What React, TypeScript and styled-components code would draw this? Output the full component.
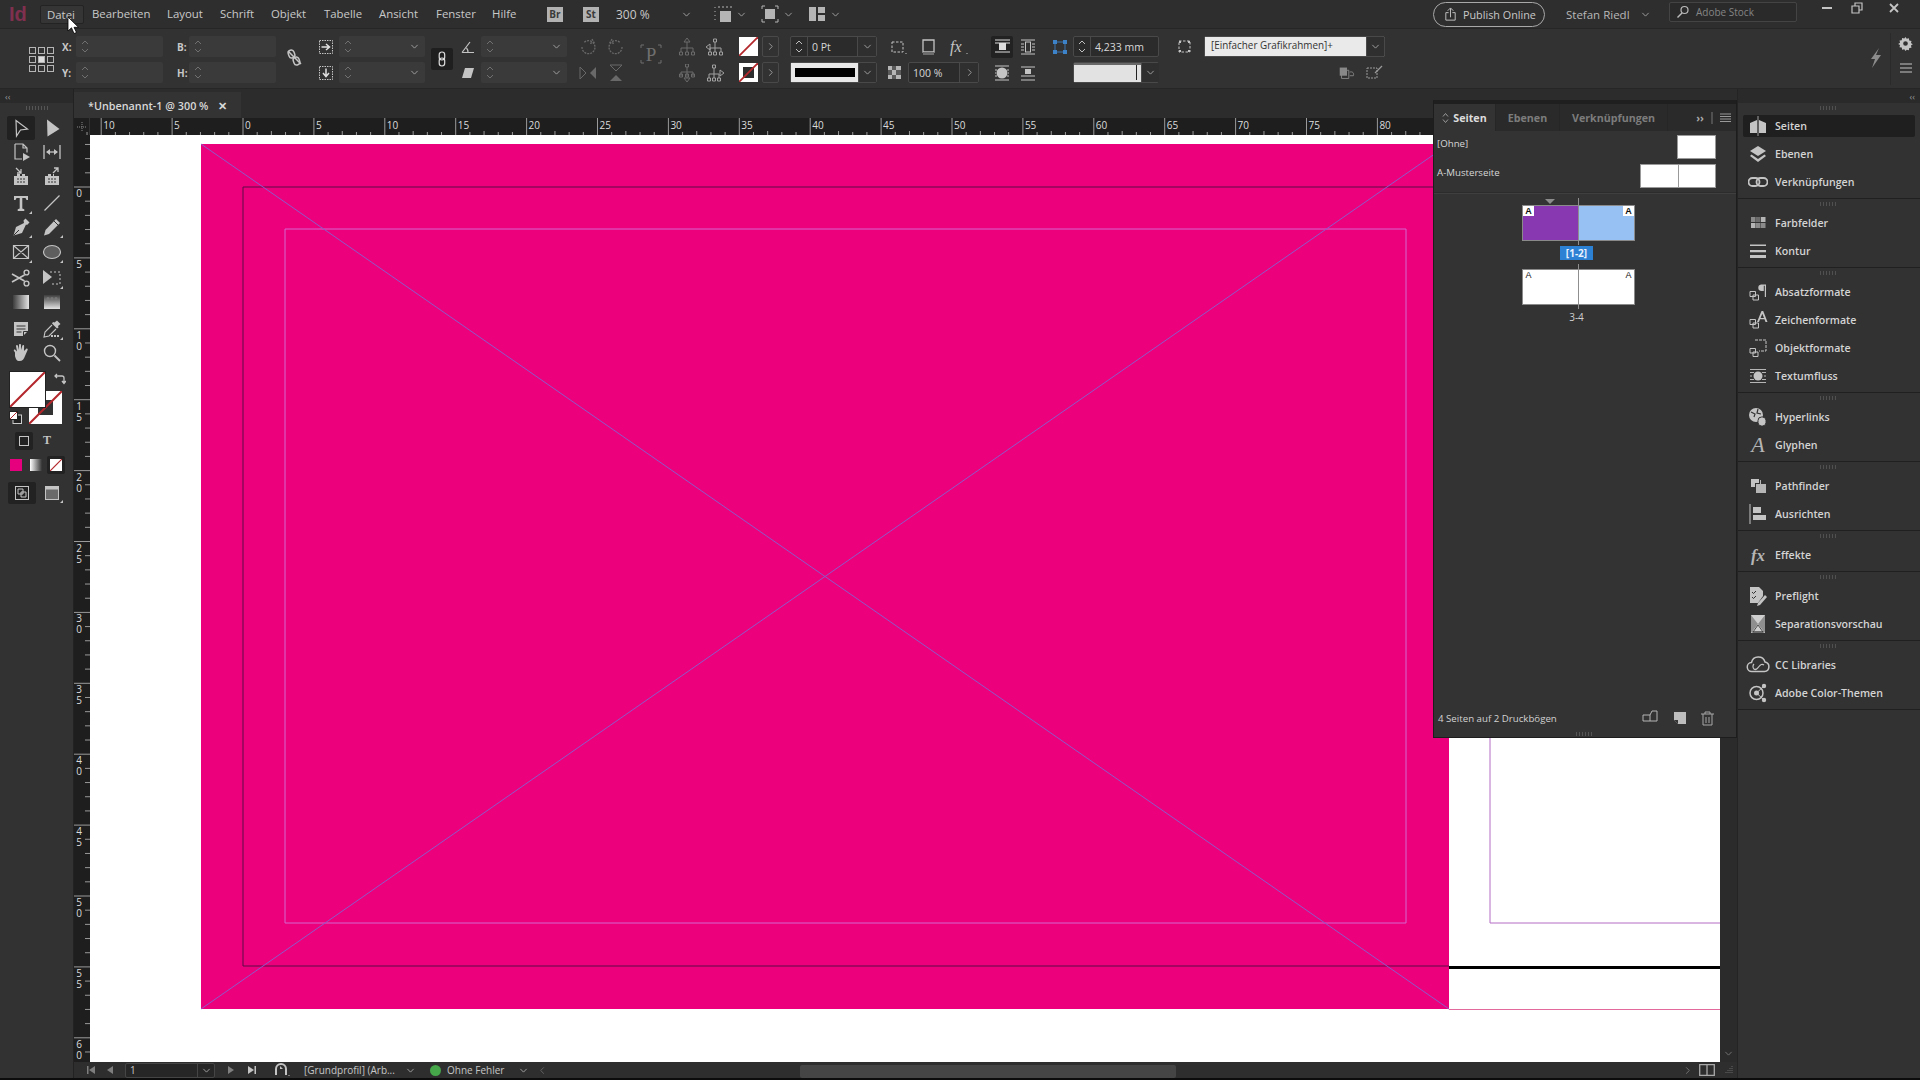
import React from "react";
import styled, { createGlobalStyle } from "styled-components";

const Global = createGlobalStyle`
  html, body { margin: 0; padding: 0; background: #0c0c0c; }
  * { box-sizing: border-box; }
  body { font-family: "Open Sans", "Noto Sans", sans-serif; color: #d6d6d6; }
`;

const Frame = styled.div`
  position: relative; width: 1920px; height: 1080px; overflow: hidden;
  display: flex; flex-direction: column; background: #0c0c0c;
`;

/* ---------- generic drawing ---------- */
const Svg = styled.svg<{ $c?: string }>`
  display: block; flex: none; color: ${p => p.$c || "#c4c4c4"};
`;
type IP = { s?: number; c?: string; children?: React.ReactNode; vb?: string; w?: number; h?: number };
const Ic = ({ s = 20, c, children, vb = "0 0 20 20", w, h }: IP) => (
  <Svg $c={c} width={w || s} height={h || s} viewBox={vb} fill="none" stroke="none">{children}</Svg>
);
const F = "currentColor";

/* ---------- menu bar ---------- */
const MenuBar = styled.div`
  height: 29px; flex: none; background: #2e2e2e; border-bottom: 1px solid #262626;
  display: flex; align-items: center; font-size: 11.4px; color: #c9c9c9; padding-left: 9px;
`;
const Logo = styled.div`
  width: 31px; font: 700 20px "Liberation Sans", sans-serif; color: #80304f; letter-spacing: 0; line-height: 1;
`;
const MenuItem = styled.div<{ $w: number; $on?: boolean }>`
  width: ${p => p.$w}px; height: 19px; line-height: 18px; padding-left: 8px; flex: none; border-radius: 2px;
  ${p => p.$on ? "background:#353535;border:1px solid #232323;padding-left:6px;line-height:17px;" : ""}
`;
const Badge = styled.div<{ $ml: number }>`
  width: 16px; height: 15px; margin-left: ${p => p.$ml}px; background: #b2b2b2; color: #3a3a3a; flex: none;
  font: 700 10px/15px "Open Sans", sans-serif; text-align: center;
`;
const Zoom = styled.div`
  margin-left: 17px; width: 66px; font-size: 12px; flex: none;
`;
const Publish = styled.div`
  position: relative; display: flex; align-items: center; gap: 5px; margin-left: auto; width: 112px; height: 25px;
  border: 1px solid #a8a8a8; border-radius: 13px; padding-left: 9px; font-size: 10.8px; flex: none;
`;
const UserName = styled.div`
  margin-left: 21px; font-size: 11.5px; color: #b8b8b8; width: 75px; flex: none;
`;
const Search = styled.div`
  margin-left: 19px; width: 128px; height: 20px; margin-top: -5px; background: #2a2a2a; border: 1px solid #444; border-radius: 2px;
  display: flex; align-items: center; gap: 6px; padding-left: 6px; color: #858585; font-size: 10px; flex: none;
`;
const WinCtl = styled.div`
  display: flex; margin-left: 15px; width: 108px; align-items: center; margin-top: -12px; color: #8a8a8a; flex: none;
`;
const WinBtn = styled.div<{ $w: number }>`
  width: ${p => p.$w}px; height: 16px; display: flex; align-items: center; justify-content: center;
`;
const Caret = ({ c = "#a6a6a6", s = 9 }: { c?: string; s?: number }) => (
  <Ic s={s} c={c} vb="0 0 10 10"><path d="M1.500 3.200 5 6.800l3.500-3.600" stroke={F} strokeWidth="1" /></Ic>
);
const MenuIcon = styled.div<{ $ml: number }>`
  margin-left: ${p => p.$ml}px; display: flex; align-items: center; gap: 5px; flex: none;
`;

/* ---------- control bar ---------- */
const ControlBar = styled.div`
  height: 60px; flex: none; background: #323232; border-bottom: 1px solid #262626;
  display: flex; align-items: flex-start; padding-top: 7px; position: relative; font-size: 10.5px; color: #d0d0d0;
`;
const Col = styled.div<{ $l: number; $w: number; $pt?: number }>`
  margin-left: ${p => p.$l}px; width: ${p => p.$w}px; flex: none; display: flex; flex-direction: column; gap: 5px;
  padding-top: ${p => p.$pt || 0}px;
`;
const CRow = styled.div<{ $gap?: number; $pl?: number }>`
  height: 21px; display: flex; align-items: center; gap: ${p => p.$gap || 0}px; padding-left: ${p => p.$pl || 0}px;
`;
const FieldLabel = styled.div<{ $w: number }>`
  width: ${p => p.$w}px; font-weight: 700; font-size: 10px; color: #c8c8c8; flex: none;
`;
const GhostInput = styled.div<{ $w: number }>`
  width: ${p => p.$w}px; height: 21px; background: #3a3a3a; border-radius: 2px; flex: none;
  display: flex; align-items: center; justify-content: space-between; padding: 0 6px 0 4px;
`;
const Stepper = ({ c = "#707070" }: { c?: string }) => (
  <Ic w={10} h={17} c={c} vb="0 0 10 17">
    <path d="M2 6 5 3l3 3M2 11l3 3 3-3" stroke={F} strokeWidth="1" />
  </Ic>
);
const Field = styled.div<{ $w: number; $fill?: string }>`
  width: ${p => p.$w}px; height: 21px; flex: none; background: ${p => p.$fill || "#2b2b2b"};
  border: 1px solid #494949; border-radius: 2px; display: flex; align-items: center; color: #d8d8d8;
`;
const FieldStep = styled.div`
  width: 17px; height: 100%; border-right: 1px solid #494949; display: flex; align-items: center; justify-content: center; flex: none;
`;
const FieldText = styled.div`
  flex: 1; padding-left: 4px; white-space: nowrap; font-size: 10.5px;
`;
const FieldEnd = styled.div<{ $w?: number }>`
  width: ${p => p.$w || 19}px; height: 100%; background: #2f2f2f; border-left: 1px solid #494949; display: flex; align-items: center; justify-content: center; flex: none;
`;
const Chain = styled.div<{ $l: number }>`
  margin: 12px 0 0 ${p => p.$l}px; width: 22px; height: 22px; background: #1f1f1f; border-radius: 2px; flex: none;
  display: flex; align-items: center; justify-content: center;
`;
const Grip = styled.div`
  width: 4px; height: 34px; margin: 9px 0 0 4px; flex: none;
  background-image: radial-gradient(#4c4c4c 35%, transparent 40%); background-size: 2px 2px;
`;
const Swatch = styled.div`
  width: 19px; height: 19px; position: relative; background: #fff; flex: none; overflow: hidden;
`;
const SlashBox = () => (
  <Ic s={19} c="#b3262b" vb="0 0 19 19"><path d="M0 19 19 0" stroke={F} strokeWidth="1.800" /></Ic>
);
const ArrowBtn = styled.div`
  width: 17px; height: 21px; border: 1px solid #494949; border-radius: 2px; display: flex; align-items: center; justify-content: center; flex: none;
`;
const Chev = ({ c = "#a0a0a0" }: { c?: string }) => (
  <Ic s={9} c={c} vb="0 0 10 10"><path d="M3.500 1.500 7 5 3.500 8.500" stroke={F} strokeWidth="1" /></Ic>
);
const StrokeBar = styled.div`
  width: 67px; height: 100%; background: #e8e8e8; display: flex; align-items: center; justify-content: center; flex: none;
`;
const StrokeInk = styled.div`
  width: 60px; height: 9px; background: #000;
`;
const DarkBtn = styled.div`
  width: 22px; height: 22px; background: #222; border-radius: 2px; display: flex; align-items: center; justify-content: center; flex: none;
`;
const IconCell = styled.div<{ $w?: number }>`
  width: ${p => p.$w || 22}px; display: flex; align-items: center; justify-content: center; flex: none;
`;
const LightFrame = styled.div`
  width: 67px; height: 100%; background: #e2e2e2; flex: none; position: relative;
  border-top: 2px solid #686868;
`;
const LightFrameTick = styled.div`
  position: absolute; right: 4px; top: 0; bottom: 2px; width: 1px; background: #222;
`;
const StyleSelect = styled.div`
  width: 161px; height: 100%; background: #eaeaea; color: #333; padding-left: 6px; font-size: 9.900px; line-height: 17px; flex: none; white-space: nowrap; overflow: hidden;
`;
const ControlEnd = styled.div`
  margin-left: auto; width: 30px; display: flex; flex-direction: column; align-items: center; gap: 10px; padding-top: 3px; border-left: 1px solid #2a2a2a; height: 52px; margin-top: -3px;
`;

/* ---------- body ---------- */
const Body = styled.div`
  position: relative; flex: 1; display: flex; min-height: 0; margin-bottom: 2px;
`;
const Side = styled.div<{ $w: number }>`
  width: ${p => p.$w}px; flex: none; display: flex; flex-direction: column; background: #323232;
`;
const CollapseStrip = styled.div<{ $align: string }>`
  height: 14px; flex: none; background: #2a2a2a; display: flex; align-items: center; padding: 0 5px;
  justify-content: ${p => p.$align}; color: #999; font-size: 9px; line-height: 1;
`;
const Gripper = styled.div`
  width: 22px; height: 4px; margin: 3px auto 0; flex: none;
  background-image: repeating-linear-gradient(90deg, #555 0 1px, transparent 1px 3px);
`;
const Tools = styled.div`
  display: flex; flex-direction: column; padding: 6px 0 0 5px;
`;
const ToolGroup = styled.div`
  display: grid; grid-template-columns: 31px 31px; grid-auto-rows: 24.300px; margin-bottom: 2px;
`;
const Tool = styled.div<{ $on?: boolean }>`
  position: relative; display: flex; align-items: center; justify-content: center; border-radius: 2px;
  ${p => p.$on ? "background:#212121;margin:0 1px 0 2px;" : ""}
`;
const Corner = styled.i<{ $r?: number }>`
  position: absolute; right: ${p => p.$r ?? 4}px; bottom: 1px; width: 0; height: 0;
  border-left: 3px solid transparent; border-bottom: 3px solid #c4c4c4;
`;
const SwatchArea = styled.div`
  position: relative; height: 58px; margin: 5px 0 0 0;
`;
const Fill = styled.div`
  position: absolute; left: 10px; top: 0; width: 35px; height: 35px; background: #fff; z-index: 2; box-shadow: 0 0 0 1px #222;
`;
const StrokeBox = styled.div`
  position: absolute; left: 29px; top: 19px; width: 33px; height: 33px; background: #fff; display: flex; align-items: center; justify-content: center;
`;
const StrokeHole = styled.div`
  width: 15px; height: 15px; background: #323232;
`;
const SlashOver = styled.div`
  position: absolute; inset: 0;
`;
const SwapArrow = styled.div`
  position: absolute; left: 54px; top: 1px;
`;
const MiniDefault = styled.div`
  position: absolute; left: 9px; top: 39px;
`;
const ToolRow = styled.div<{ $mt: number; $pl: number; $gap: number }>`
  display: flex; align-items: center; margin-top: ${p => p.$mt}px; padding-left: ${p => p.$pl}px; gap: ${p => p.$gap}px;
`;
const SmallBtn = styled.div<{ $on?: boolean; $w?: number; $h?: number }>`
  position: relative; width: ${p => p.$w || 18}px; height: ${p => p.$h || 18}px; display: flex; align-items: center; justify-content: center; border-radius: 2px; flex: none;
  background: ${p => p.$on ? "#222" : "transparent"};
  color: #c4c4c4; font: 700 12px "Liberation Serif", serif;
`;
const Workspace = styled.div`
  flex: 1; min-width: 0; display: flex; flex-direction: column; background: #2a2a2a; border-left: 1px solid #222;
`;
const TabRow = styled.div`
  height: 29px; flex: none; padding-top: 3px; display: flex; background: #2c2c2c;
`;
const DocTab = styled.div`
  width: 167px; background: #333; display: flex; align-items: center; padding-left: 14px; font-size: 10.800px; font-weight: 600; color: #d8d8d8; gap: 10px; white-space: nowrap;
`;
const RulerRow = styled.div`
  height: 17px; flex: none; display: flex; background: #1e1e1e;
`;
const RulerCorner = styled.div`
  width: 16px; flex: none; display: flex; align-items: center; justify-content: center; border-right: 1px solid #333;
`;
const RulerArt = styled.svg`
  display: block; flex: none; overflow: visible;
`;
const RulerLabelV = styled.text`
  writing-mode: vertical-rl; text-orientation: upright; letter-spacing: -3px;
  font-size: 10px; font-family: "Open Sans", sans-serif; fill: #dcdcdc;
`;
const MainRow = styled.div`
  flex: 1; min-height: 0; display: flex;
`;
const VRuler = styled.div`
  width: 16px; flex: none; background: #1e1e1e;
`;
const Canvas = styled.div`
  width: 1630px; flex: none; position: relative; background: #fff; overflow: hidden;
`;
const Bleed = styled.div`
  position: absolute; left: 111px; top: 9px; width: 1248px; height: 865px; background: #ec007c;
`;
const Overlay = styled.svg`
  position: absolute; inset: 0; display: block;
`;
const ScrollCol = styled.div`
  flex: 1; background: #2b2b2b; display: flex; flex-direction: column; justify-content: flex-end; align-items: center; padding-bottom: 4px;
`;
const StatusBar = styled.div`
  height: 16px; flex: none; background: #2e2e2e; display: flex; align-items: center; position: relative; font-size: 10px; color: #c6c6c6;
`;
const PageField = styled.div`
  margin-left: 9px; width: 90px; height: 15px; background: #262626; border: 1px solid #454545; border-radius: 2px;
  display: flex; align-items: center; justify-content: space-between; padding-left: 4px; flex: none;
`;
const PageCaret = styled.div`
  width: 17px; height: 100%; border-left: 1px solid #454545; display: flex; align-items: center; justify-content: center;
`;
const StatusCell = styled.div<{ $l: number; $w?: number }>`
  margin-left: ${p => p.$l}px; ${p => p.$w ? `width:${p.$w}px;` : ""} flex: none; display: flex; align-items: center; white-space: nowrap;
`;
const Dot = styled.div`
  width: 11px; height: 11px; border-radius: 50%; background: #45a64a; flex: none;
`;
const ScrollThumb = styled.div`
  margin-left: 253px; width: 376px; height: 13px; background: #454545; flex: none; border-radius: 2px; margin-top: 2px;
`;
const StatusRight = styled.div`
  margin-left: auto; display: flex; align-items: center; gap: 7px; padding-right: 3px;
`;

/* ---------- floating panel ---------- */
const Panel = styled.div`
  position: absolute; left: 1433px; top: 11px; width: 304px; height: 638px; background: #333;
  border: 1px solid #1d1d1d; border-top: 4px solid #1f1f1f; display: flex; flex-direction: column; font-size: 9.700px; color: #d8d8d8;
`;
const PanelTabs = styled.div`
  height: 27px; flex: none; background: #2a2a2a; display: flex; align-items: center; font-weight: 700; font-size: 10.700px;
`;
const PTab = styled.div<{ $on?: boolean; $w: number }>`
  width: ${p => p.$w}px; height: 100%; flex: none; display: flex; align-items: center; gap: 4px; justify-content: center;
  color: ${p => p.$on ? "#dcdcdc" : "#7c7c7c"}; background: ${p => p.$on ? "#333" : "transparent"};
  border-right: 1px solid #262626;
`;
const PanelTools = styled.div`
  margin-left: auto; display: flex; align-items: center; gap: 7px; padding-right: 5px; color: #aaa;
`;
const Masters = styled.div`
  display: flex; flex-direction: column; gap: 5px; padding: 4px 20px 0 3px; flex: none;
`;
const MasterRow = styled.div`
  height: 24px; display: flex; align-items: flex-start; justify-content: space-between; line-height: 18px;
`;
const MasterThumb = styled.div`
  display: flex; border: 1px solid #999; background: #fff; height: 24px;
`;
const MasterPage = styled.div<{ $b?: boolean }>`
  width: 37px; background: #fff; ${p => p.$b ? "border-left:1px solid #999;" : ""}
`;
const MastersEnd = styled.div`
  height: 1px; background: #3f3f3f; flex: none; margin-top: 5px; box-shadow: 0 -1px 0 #2c2c2c;
`;
const PagesArea = styled.div`
  flex: 1; display: flex; flex-direction: column; align-items: flex-start; padding: 5px 0 0 88px; position: relative;
`;
const Marker = styled.div`
  width: 0; height: 0; margin: 0 0 1px 23px; border-left: 5px solid transparent; border-right: 5px solid transparent; border-top: 5px solid #8c8c8c;
`;
const Spread = styled.div`
  position: relative; width: 113px; height: 36px; display: flex; border: 1px solid #8a8a8a;
`;
const SpreadPage = styled.div<{ $c: string }>`
  flex: 1; background: ${p => p.$c};
`;
const Spine = styled.div<{ $t: number; $b: number }>`
  position: absolute; left: 55px; top: ${p => p.$t}px; bottom: ${p => p.$b}px; width: 1px; background: #8f8f8f;
`;
const PageA = styled.div<{ $r?: boolean; $strong?: boolean }>`
  position: absolute; top: 0; ${p => p.$r ? "right:0" : "left:0"}; width: 11px; height: 10px; font: ${p => p.$strong ? 700 : 400} 9px/10px "Liberation Sans", sans-serif;
  text-align: center; color: #111; background: ${p => p.$strong ? "#fff" : "transparent"};
`;
const SpreadLabel = styled.div<{ $on?: boolean }>`
  width: 33px; margin-left: 38px; height: 14px; line-height: 14px; text-align: center; margin-top: 5px; margin-bottom: 9px;
  font-size: 10px; font-weight: ${p => p.$on ? 700 : 400}; background: ${p => p.$on ? "#2d81d4" : "transparent"}; color: ${p => p.$on ? "#e9f2ff" : "#d0d0d0"};
`;
const PanelFoot = styled.div`
  height: 32px; flex: none; display: flex; align-items: center; padding: 0 0 6px 4px; font-size: 9.700px; color: #d2d2d2; position: relative;
`;
const FootIcons = styled.div`
  margin-left: auto; display: flex; align-items: center; gap: 13px; padding-right: 21px;
`;
const FootGrip = styled.div`
  position: absolute; bottom: 1px; left: 142px; width: 18px; height: 4px;
  background-image: repeating-linear-gradient(90deg, #555 0 1px, transparent 1px 3px);
`;

/* ---------- dock ---------- */
const Dock = styled(Side)`
  border-left: 1px solid #242424;
`;
const DockSection = styled.div<{ $first?: boolean }>`
  position: relative; padding: ${p => p.$first ? "9px" : "10px"} 5px 2px 5px;
  ${p => p.$first ? "" : "border-top: 1px solid #202020;"}
  &::before {
    content: ""; position: absolute; top: 3px; left: 82px; width: 18px; height: 4px;
    background-image: repeating-linear-gradient(90deg, #505050 0 1px, transparent 1px 3px);
  }
`;
const DockItem = styled.div<{ $on?: boolean }>`
  height: 28px; display: flex; align-items: center; font-size: 10.600px; font-weight: 600; color: #d4d4d4; position: relative;
  ${p => p.$on ? `&::before{content:"";position:absolute;left:0;right:0;top:3px;bottom:3px;background:#1f1f1f;border-radius:2px;}` : ""}
`;
const DockIcon = styled.div<{ $big?: boolean }>`
  width: 30px; display: flex; justify-content: center; align-items: center; flex: none; position: relative; margin-right: 2px;
  font: italic ${p => p.$big ? "400 22px" : "700 17px"} "Liberation Serif", serif; color: #b5b5b5; line-height: 1;
`;
const DockLabel = styled.div`
  position: relative;
`;
const DockFill = styled.div`
  flex: 1; border-top: 1px solid #202020;
`;
const Cursor = styled.svg`
  position: absolute; left: 67px; top: 16px; z-index: 5;
`;

/* ---------- icons ---------- */
const SelectI = <Ic><path d="M5 2.500 16.500 11 9.500 12l-4 6z" stroke={F} strokeWidth="1.200" /></Ic>;
const DirectI = <Ic><path d="M5 1.500 17.500 11l-12 7.500z" fill={F} /></Ic>;
const PageI = <Ic><path d="M4 2h8l4 4v4.500M4 2v15h7M12 2v4h4" stroke={F} strokeWidth="1.200" /><path d="M12 11l7 4-7 4z" fill={F} /></Ic>;
const GapI = <Ic><path d="M2 3v14M18 3v14" stroke={F} strokeWidth="1.300" /><path d="M5 10h10" stroke={F} strokeWidth="1.300" /><path d="M8 7l-4 3 4 3zM12 7l4 3-4 3z" fill={F} /></Ic>;
const CollectI = <Ic><path d="M3 9h3v-2h3v2h2V7h3v2h3v9H3z" fill={F} /><path d="M5 1l5 5M10 2v4H6" stroke={F} strokeWidth="1.300" /><path d="M6 12h2M9 12h2M12 12h2M6 15h2M9 15h2M12 15h2" stroke="#323232" /></Ic>;
const PlaceI = <Ic><path d="M3 9h3v-2h3v2h2V7h1v2h5v9H3z" fill={F} /><path d="M11 6l5-5M12 1h4v4" stroke={F} strokeWidth="1.300" /><path d="M6 12h2M9 12h2M12 12h2M6 15h2M9 15h2M12 15h2" stroke="#323232" /></Ic>;
const TypeI = <Ic><path d="M3 3h14v4h-1.500l-1-2H11.300v10.500l2 .800V18H6.700v-1.700l2-.800V5H5.500l-1 2H3z" fill={F} /></Ic>;
const LineI = <Ic><path d="M2.500 17.500 17.500 2.500" stroke={F} strokeWidth="1.300" /></Ic>;
const PenI = <Ic><path d="M14.500 1.500 18.500 5.500 16 8l-1-.5L11 16l-8.500 2.500L5 10l8-4-.5-2.500z" fill={F} /><path d="M3 18l5-5" stroke="#323232" /></Ic>;
const PencilI = <Ic><path d="M14 2l4 4L7 17l-5 1.500L3.500 13z" fill={F} /><path d="M12 4l4 4" stroke="#323232" /></Ic>;
const FrameI = <Ic><path d="M2.500 3.500h15v13h-15zM2.500 3.500l15 13M17.500 3.500l-15 13" stroke={F} strokeWidth="1.200" /></Ic>;
const EllipseI = <Ic><ellipse cx="10" cy="10" rx="8.500" ry="6.500" fill="#5e5e5e" stroke={F} strokeWidth="1.100" /></Ic>;
const ScissorsI = <Ic><circle cx="15.500" cy="4.500" r="2.400" stroke={F} strokeWidth="1.400" /><circle cx="15.500" cy="15.500" r="2.400" stroke={F} strokeWidth="1.400" /><path d="M1 6l12.500 7M1 14l12.500-7" stroke={F} strokeWidth="1.700" /></Ic>;
const TransformI = <Ic><path d="M1 2l9 7-9 7z" fill={F} /><path d="M8 4h10v12H8" stroke={F} strokeWidth="1" strokeDasharray="2 2" /></Ic>;
const GradI = (
  <Ic><defs><linearGradient id="g1" x1="0" x2="1"><stop offset="0" stopColor="#3d3d3d" /><stop offset="1" stopColor="#e4e4e4" /></linearGradient></defs><rect x="2" y="3" width="16" height="14" fill="url(#g1)" /></Ic>
);
const FeatherI = (
  <Ic><defs><linearGradient id="g2" x1="0" x2="0" y1="0" y2="1"><stop offset="0" stopColor="#3d3d3d" /><stop offset="1" stopColor="#e4e4e4" /></linearGradient></defs><rect x="2" y="3" width="16" height="14" fill="url(#g2)" /><circle cx="6" cy="6.500" r="1.500" fill="#777" /><circle cx="10" cy="6.500" r="1.500" fill="#777" /><circle cx="14" cy="6.500" r="1.500" fill="#777" /></Ic>
);
const NoteI = <Ic><path d="M3 3h14v9l-5 5H3z" fill={F} /><path d="M5.500 7h9M5.500 10h9M5.500 13h5" stroke="#323232" strokeWidth="1.100" /><path d="M12.500 17v-4.500H17" stroke="#323232" /></Ic>;
const DropperI = <Ic><path d="M15 1.500l3.500 3.500-2.500 2 .5 1.500-1.500 1-5-5 1-1.500 1.500.5z" fill={F} /><path d="M10 6L3 13l-1 5 5-1 7-7" stroke={F} strokeWidth="1.100" /><path d="M9 16h2v2H9zM12 16h2v2h-2zM15 16h2v2h-2z" fill={F} /></Ic>;
const HandI = <Ic><path d="M4 9.500 3 8c-.8-1 .6-2 1.500-1L6 8.500 5 3c0-1.200 1.800-1.200 2 0l1 4V1.800c0-1.200 2-1.200 2 0V7l1.300-4.300c.3-1.200 2-.8 1.800.4L13 8l2-2c1-1 2.300 0 1.500 1.200L14 13c-1 3-2.500 5-5.500 5S5 16.500 4 13z" fill={F} /></Ic>;
const ZoomI = <Ic><circle cx="8" cy="8" r="5.500" stroke={F} strokeWidth="1.400" /><path d="M12.500 12.500 18 18" stroke={F} strokeWidth="1.800" /></Ic>;

const tools: [React.ReactNode, boolean, boolean][][] = [
  [[SelectI, true, false], [DirectI, false, false], [PageI, false, false], [GapI, false, false], [CollectI, false, false], [PlaceI, false, false]],
  [[TypeI, false, true], [LineI, false, false], [PenI, false, true], [PencilI, false, true], [FrameI, false, true], [EllipseI, false, true]],
  [[ScissorsI, false, false], [TransformI, false, true], [GradI, false, false], [FeatherI, false, false]],
  [[NoteI, false, false], [DropperI, false, true], [HandI, false, false], [ZoomI, false, false]],
];

const dockSections: [string, React.ReactNode][][] = [
  [
    ["Seiten", <Ic s={20}><path d="M2 17V7l7-3v13zM11 4l7 3v10h-7z" fill={F} /><path d="M10 0v20" stroke={F} strokeWidth=".8" /></Ic>],
    ["Ebenen", <Ic s={20}><path d="M10 2l8 5-8 5-8-5z" fill={F} /><path d="M3.500 10.500 2 12l8 6 8-6-1.500-1.500L10 15z" fill={F} /></Ic>],
    ["Verknüpfungen", <Ic s={20}><rect x=".5" y="6" width="11" height="8" rx="4" stroke={F} strokeWidth="1.800" /><rect x="8.500" y="6" width="11" height="8" rx="4" stroke={F} strokeWidth="1.800" /></Ic>],
  ],
  [
    ["Farbfelder", <Ic s={20}><path d="M3 4h4.500v5H3z" fill="#8a8a8a" /><path d="M8 4h4.500v5H8z" fill="#6b6b6b" /><path d="M13 4h4.500v5H13z" fill="#b5b5b5" /><path d="M3 10h4.500v5H3z" fill="#b5b5b5" /><path d="M8 10h4.500v5H8z" fill="#8a8a8a" /><path d="M13 10h4.500v5H13z" fill="#8a8a8a" /></Ic>],
    ["Kontur", <Ic s={20}><path d="M2 3.500h16v1.500H2zM2 9h16v2.200H2zM2 14h16v3H2z" fill={F} /></Ic>],
  ],
  [
    ["Absatzformate", <Ic s={20}><path d="M2 9.500h5.500v5H2zM5 13h5.500v5H5z" stroke={F} /><path d="M13 2.500h5V15h-1.200V3.700h-1V9H13a3.300 3.300 0 0 1 0-6.500z" fill={F} /></Ic>],
    ["Zeichenformate", <Ic s={20}><path d="M2 9.500h5.500v5H2zM5 13h5.500v5H5z" stroke={F} /><path d="M13.500 1h1.700l4.300 11h-2l-1-2.800h-4.500l-1 2.800h-2zm.8 2.800L12.600 8h3.400z" fill={F} /></Ic>],
    ["Objektformate", <Ic s={20}><path d="M2 10.500h5.500v4.500H2zM5 14h5v4.500H5z" stroke={F} /><path d="M7 2h11v11h-7" stroke={F} strokeDasharray="3 1" /></Ic>],
    ["Textumfluss", <Ic s={20}><circle cx="10" cy="10" r="4.500" fill={F} /><path d="M2 3.500h16M2 6.500h4M14 6.500h4M2 10h2M16 10h2M2 13.500h4M14 13.500h4M2 16.500h16" stroke={F} strokeWidth=".9" /></Ic>],
  ],
  [
    ["Hyperlinks", <Ic s={20}><circle cx="8" cy="8" r="7" fill={F} /><path d="M3 5l4 2-1 3M10 2l-1 4 4 1" stroke="#323232" strokeWidth="1.200" /><rect x="10" y="10" width="8" height="9" rx="3.500" fill={F} stroke="#323232" /></Ic>],
    ["Glyphen", <>A</>],
  ],
  [
    ["Pathfinder", <Ic s={20}><path d="M3 3h8v4H7v4H3z" fill={F} /><path d="M8 8h4V4h1v4h5v9H8z" fill={F} opacity=".9" /></Ic>],
    ["Ausrichten", <Ic s={20}><path d="M2 0v20" stroke={F} /><path d="M5 3h8v6H5zM5 11h13v5H5z" fill={F} /></Ic>],
  ],
  [["Effekte", <>fx</>]],
  [
    ["Preflight", <Ic s={20}><path d="M2 1h9l4 4v5l-5 7H2z" fill={F} /><path d="M4 6l1.500 1.500L8 5M4 11l1.500 1.500L8 10" stroke="#323232" /><path d="M17 9l2 2-7 8-3 1 1-3z" fill={F} /></Ic>],
    ["Separationsvorschau", <Ic s={20}><path d="M3 1h14v18H3z" fill="#8f8f8f" /><path d="M3 1h14l-7 9zM3 19l7-9 7 9z" fill="#cfcfcf" /><path d="M4 18h12M10 11l5 7H5z" stroke="#323232" strokeWidth=".8" /></Ic>],
  ],
  [
    ["CC Libraries", <Ic w={24} h={20} vb="0 0 24 20"><path d="M6 16.500a4.500 4.500 0 0 1-.5-9A7 7 0 0 1 19 7a4.800 4.800 0 0 1-.5 9.500z" stroke={F} strokeWidth="1.500" /><path d="M8 9a3.500 3.500 0 0 0 0 5c2 1.500 3.500-.5 5-2.500s3-3 5-1.500" stroke={F} strokeWidth="1.200" /></Ic>],
    ["Adobe Color-Themen", <Ic s={20}><circle cx="8.500" cy="10" r="6.500" stroke={F} strokeWidth="1.500" /><circle cx="8.500" cy="10" r="2.500" fill={F} /><path d="M8.500 10 16 3M8.500 10 16 17" stroke={F} /><circle cx="16" cy="3" r="2.200" fill={F} /><circle cx="16" cy="17" r="2.200" fill={F} /></Ic>],
  ],
];

/* ---------- rulers ---------- */
const range = (a: number, b: number) => Array.from({ length: b - a + 1 }, (_, i) => a + i);
const MM = 14.18;

const HRuler = () => {
  const W = 1647, Z = 153;
  const minor = range(-11, 85).map(i => {
    const x = Z + i * MM;
    return i % 5 === 0 ? `M${x} 0V17` : `M${x} ${i % 5 === 2 ? 13 : 14}V17`;
  }).join("");
  return (
    <RulerArt width={W} height={17}>
      <path d={minor} stroke="#9a9a9a" strokeWidth="1" fill="none" />
      {range(-2, 16).map(k => (
        <text key={k} x={Z + k * MM * 5 + 2} y={11} fontSize="10" fill="#dcdcdc" fontFamily="Open Sans">{Math.abs(k * 5)}</text>
      ))}
    </RulerArt>
  );
};
const VRulerArt = () => {
  const H = 925, Z = 52;
  const minor = range(-3, 61).map(i => {
    const y = Z + i * MM;
    return i % 5 === 0 ? `M0 ${y}H16` : `M11 ${y}H16`;
  }).join("");
  return (
    <RulerArt width={16} height={H}>
      <path d={minor} stroke="#9a9a9a" strokeWidth="1" fill="none" />
      {range(0, 12).map(k => (
        <RulerLabelV key={k} x={5} y={Z + k * MM * 5 - 1}>{k * 5}</RulerLabelV>
      ))}
    </RulerArt>
  );
};

const NavI = ({ d }: { d: string }) => <Ic s={12} c="#7e7e7e" vb="0 0 12 12"><path d={d} fill={F} /></Ic>;

export default function App() {
  return (
    <>
      <Global />
      <Frame>
        <MenuBar>
          <Logo>Id</Logo>
          <MenuItem $w={44} $on>Datei</MenuItem>
          <MenuItem $w={75}>Bearbeiten</MenuItem>
          <MenuItem $w={53}>Layout</MenuItem>
          <MenuItem $w={51}>Schrift</MenuItem>
          <MenuItem $w={53}>Objekt</MenuItem>
          <MenuItem $w={55}>Tabelle</MenuItem>
          <MenuItem $w={57}>Ansicht</MenuItem>
          <MenuItem $w={56}>Fenster</MenuItem>
          <MenuItem $w={47}>Hilfe</MenuItem>
          <Badge $ml={16}>Br</Badge>
          <Badge $ml={20}>St</Badge>
          <Zoom>300 %</Zoom>
          <Caret />
          <MenuIcon $ml={23}>
            <Ic s={18} vb="0 0 18 18"><path d="M6 6h11v11H6z" fill="#b5b5b5" /><path d="M1 2v1M1 6v1M1 10v1M1 14v1M5 1v2M9 1v2M13 1v2M17 1v2" stroke="#b5b5b5" /></Ic>
            <Caret />
          </MenuIcon>
          <MenuIcon $ml={15}>
            <Ic s={18} vb="0 0 18 18"><path d="M4 4h10v10H4z" fill="#b5b5b5" /><path d="M1 4V1h3M14 1h3v3M1 14v3h3M14 17h3v-3" stroke="#b5b5b5" /></Ic>
            <Caret />
          </MenuIcon>
          <MenuIcon $ml={15}>
            <Ic s={18} vb="0 0 18 18"><path d="M1 2h7v14H1zM10 2h7v6h-7zM10 10h7v6h-7z" fill="#b5b5b5" /></Ic>
            <Caret />
          </MenuIcon>
          <Publish>
            <Ic s={15} vb="0 0 16 16"><path d="M3 6h3M10 6h3v8H3V6" stroke={F} /><path d="M8 11V1.500M5 4l3-3 3 3" stroke={F} /></Ic>
            Publish Online
          </Publish>
          <UserName>Stefan Riedl</UserName>
          <Caret />
          <Search>
            <Ic s={14} vb="0 0 14 14"><circle cx="8.500" cy="5" r="3.500" stroke="#bbb" strokeWidth="1.200" /><path d="M6 8 1.500 12.500" stroke="#bbb" strokeWidth="1.500" /></Ic>
            Adobe Stock
          </Search>
          <WinCtl>
            <WinBtn $w={30}><Ic s={12} vb="0 0 12 12"><path d="M1 6h10" stroke={F} strokeWidth="2" /></Ic></WinBtn>
            <WinBtn $w={30}><Ic s={12} vb="0 0 12 12"><path d="M1 4h7v7H1zM4 4V1h7v7H8" stroke={F} strokeWidth="1.200" /></Ic></WinBtn>
            <WinBtn $w={44}><Ic s={12} vb="0 0 12 12"><path d="M2 2l8 8M10 2l-8 8" stroke={F} strokeWidth="1.800" /></Ic></WinBtn>
          </WinCtl>
        </MenuBar>

        <ControlBar>
          <Grip />
          <Col $l={21} $w={24} $pt={11}>
            <Ic w={25} h={26} c="#b5b5b5" vb="0 0 25 26" >
              {[0, 1, 2].flatMap(r => [0, 1, 2].map(c => (
                <rect key={`${r}${c}`} x={c * 9 + .5} y={r * 9 + .5} width="6" height="6" stroke={F} fill={r === 1 && c === 1 ? "#ddd" : "none"} />
              )))}
            </Ic>
          </Col>
          <Col $l={9} $w={101}>
            <CRow><FieldLabel $w={14}>X:</FieldLabel><GhostInput $w={87}><Stepper /></GhostInput></CRow>
            <CRow><FieldLabel $w={14}>Y:</FieldLabel><GhostInput $w={87}><Stepper /></GhostInput></CRow>
          </Col>
          <Col $l={14} $w={99}>
            <CRow><FieldLabel $w={12}>B:</FieldLabel><GhostInput $w={87}><Stepper /></GhostInput></CRow>
            <CRow><FieldLabel $w={12}>H:</FieldLabel><GhostInput $w={87}><Stepper /></GhostInput></CRow>
          </Col>
          <Col $l={10} $w={16} $pt={13}>
            <Ic s={17} vb="0 0 17 17"><rect x="2.500" y="1" width="6" height="8" rx="3" transform="rotate(-20 5.500 5)" stroke={F} strokeWidth="1.500" /><rect x="7.500" y="8" width="6" height="8" rx="3" transform="rotate(-20 10.500 12)" stroke={F} strokeWidth="1.500" /><path d="M2 2l13 13" stroke={F} strokeWidth="1.500" /></Ic>
          </Col>
          <Col $l={17} $w={106}>
            <CRow $gap={6}><Ic s={14} vb="0 0 14 14"><path d="M.5.5h13v13H.5z" stroke={F} strokeDasharray="1.500 1" /><path d="M2.500 7h7M7 4l3.500 3L7 10" stroke="#e0e0e0" strokeWidth="1.500" /></Ic><GhostInput $w={86}><Stepper /><Caret /></GhostInput></CRow>
            <CRow $gap={6}><Ic s={14} vb="0 0 14 14"><path d="M.5.5h13v13H.5z" stroke={F} strokeDasharray="1.500 1" /><path d="M7 2.500v7M4 7l3 3.500L10 7" stroke="#e0e0e0" strokeWidth="1.500" /></Ic><GhostInput $w={86}><Stepper /><Caret /></GhostInput></CRow>
          </Col>
          <Chain $l={6}>
            <Ic s={16} vb="0 0 16 16"><rect x="5.200" y="1" width="5.500" height="8" rx="2.700" stroke="#ddd" strokeWidth="1.200" /><rect x="5.200" y="7" width="5.500" height="8" rx="2.700" stroke="#ddd" strokeWidth="1.200" /></Ic>
          </Chain>
          <Col $l={8} $w={106}>
            <CRow $gap={6}><IconCell $w={14}><Ic s={14} vb="0 0 14 14"><path d="M1 12.500h12M1 12.500 9 2M5.500 8c1 1 1.500 3 1.500 4.500" stroke={F} strokeWidth="1.200" /></Ic></IconCell><GhostInput $w={86}><Stepper /><Caret /></GhostInput></CRow>
            <CRow $gap={6}><IconCell $w={14}><Ic s={14} vb="0 0 14 14"><path d="M4 2h9l-3 10H1z" fill={F} /></Ic></IconCell><GhostInput $w={86}><Stepper /><Caret /></GhostInput></CRow>
          </Col>
          <Col $l={12} $w={48}>
            <CRow $gap={10}>
              <Ic s={18} c="#696969" vb="0 0 18 18"><path d="M3 9a6.500 6.500 0 1 0 2-4.500M13 1l2 3.500-4 .8" stroke={F} strokeWidth="1.300" strokeDasharray="2 1" /></Ic>
              <Ic s={18} c="#696969" vb="0 0 18 18"><path d="M15 9a6.500 6.500 0 1 1-2-4.500M5 1 3 4.500l4 .8" stroke={F} strokeWidth="1.300" strokeDasharray="2 1" /></Ic>
            </CRow>
            <CRow $gap={10}>
              <Ic s={18} c="#696969" vb="0 0 18 18"><path d="M1 3l6 6-6 6z" stroke={F} /><path d="M17 3l-6 6 6 6z" fill={F} /></Ic>
              <Ic s={18} c="#696969" vb="0 0 18 18"><path d="M3 1l6 6 6-6z" stroke={F} /><path d="M3 17l6-6 6 6z" fill={F} /></Ic>
            </CRow>
          </Col>
          <Col $l={10} $w={25} $pt={4}>
            <Ic s={28} c="#6f6f6f" vb="0 0 28 28"><path d="M4 8V5h3M24 8V5h-3M4 20v3h3M24 20v3h-3" stroke={F} /><text x="14" y="21" textAnchor="middle" fontFamily="Liberation Serif" fontSize="19" fill={F}>P</text></Ic>
          </Col>
          <Col $l={16} $w={48}>
            <CRow $gap={10}>
              <Ic s={18} c="#6a6a6a" vb="0 0 18 18"><path d="M9 0l3 4H6zM9 4v5M3 14v-4h12v4M9 9v5" stroke={F} /><path d="M1.500 14h3v3h-3zM7.500 14h3v3h-3zM13.500 14h3v3h-3z" stroke={F} /></Ic>
              <Ic s={18} c="#a0a0a0" vb="0 0 18 18"><path d="M0 9l4-3v6zM9 4v5M4 14v-4h11v4M9 9v5" stroke={F} /><path d="M2.500 14h3v3h-3zM7.500 14h3v3h-3zM13.500 14h3v3h-3zM7.500 1h3v3h-3z" stroke={F} /></Ic>
            </CRow>
            <CRow $gap={10}>
              <Ic s={18} c="#6a6a6a" vb="0 0 18 18"><path d="M9 18l3-4H6zM9 3v4M3 12V8h12v4M9 7v5" stroke={F} /><path d="M1.500 10h3v3h-3zM7.500 10h3v3h-3zM13.500 10h3v3h-3zM7.500 0h3v3h-3z" stroke={F} /></Ic>
              <Ic s={18} c="#a0a0a0" vb="0 0 18 18"><path d="M18 9l-4-3v6zM8 4v5M3 14v-4h10v4M8 9v5" stroke={F} /><path d="M1.500 14h3v3h-3zM6.500 14h3v3h-3zM11.500 14h3v3h-3zM6.500 1h3v3h-3z" stroke={F} /></Ic>
            </CRow>
          </Col>
          <Col $l={13} $w={40}>
            <CRow $gap={4}><Swatch><SlashBox /></Swatch><ArrowBtn><Chev /></ArrowBtn></CRow>
            <CRow $gap={4}><Swatch><Ic s={19} vb="0 0 19 19"><rect x="4" y="4" width="11" height="11" fill="#2d2d2d" /><path d="M0 19 19 0" stroke="#b3262b" strokeWidth="1.800" /></Ic></Swatch><ArrowBtn><Chev /></ArrowBtn></CRow>
          </Col>
          <Col $l={11} $w={87}>
            <CRow><Field $w={87}><FieldStep><Stepper c="#c0c0c0" /></FieldStep><FieldText>0 Pt</FieldText><FieldEnd><Caret /></FieldEnd></Field></CRow>
            <CRow><Field $w={87}><StrokeBar><StrokeInk /></StrokeBar><FieldEnd $w={18}><Caret /></FieldEnd></Field></CRow>
          </Col>
          <Col $l={11} $w={91}>
            <CRow $gap={8}>
              <Ic s={22} vb="0 0 22 22"><path d="M4 6h11v10H4z" stroke={F} strokeDasharray="2.500 1.500" /><path d="M17 17h2l-1 1z" fill={F} /></Ic>
              <Ic s={22} vb="0 0 22 22"><path d="M5 4h11v12H5z" stroke={F} strokeWidth="1.300" /><path d="M5 16h11v3H5z" fill="#6d6d6d" /></Ic>
              <Ic s={22} vb="0 0 22 22"><text x="2" y="16" fontFamily="Liberation Serif" fontStyle="italic" fontSize="16" fill={F}>fx</text><path d="M18 17h2l-1 1z" fill={F} /></Ic>
            </CRow>
            <CRow $gap={7}>
              <Ic s={13} vb="0 0 13 13"><rect width="13" height="13" fill="#5a5a5a" /><path d="M0 0h4v4H0zM8 0h5v4H8zM4 4h4v5H4zM0 9h4v4H0zM8 9h5v4H8z" fill="#b5b5b5" /></Ic>
              <Field $w={71}><FieldText>100 %</FieldText><FieldEnd><Chev /></FieldEnd></Field>
            </CRow>
          </Col>
          <Col $l={12} $w={50}>
            <CRow $gap={6}>
              <DarkBtn><Ic s={17} vb="0 0 17 17"><path d="M1 2h15M1 5h15M5 8h7M5 11h7M1 14h15" stroke="#ddd" /><rect x="5" y="5" width="7" height="7" fill="#ddd" /></Ic></DarkBtn>
              <Ic s={18} vb="0 0 18 18"><path d="M2 2h14M2 16h14M2 6h3M2 9h3M2 12h3M13 6h3M13 9h3M13 12h3" stroke={F} /><rect x="6.500" y="4" width="5" height="10" stroke={F} /></Ic>
            </CRow>
            <CRow $gap={6}>
              <IconCell><Ic s={18} vb="0 0 18 18"><circle cx="9" cy="9" r="5.500" fill={F} /><path d="M2 2h14M2 16h14M2 6h2M14 6h2M2 9h1M15 9h1M2 12h2M14 12h2" stroke={F} /></Ic></IconCell>
              <Ic s={18} vb="0 0 18 18"><path d="M2 3h14M2 12h14M2 16h14" stroke={F} /><rect x="6" y="5" width="6" height="5" fill={F} /></Ic>
            </CRow>
          </Col>
          <Col $l={12} $w={106}>
            <CRow $gap={6}>
              <Ic s={14} c="#3c83ca" vb="0 0 14 14"><path d="M0 0h4v4H0zM10 0h4v4h-4zM0 10h4v4H0zM10 10h4v4h-4z" fill={F} /><path d="M4 2h6M4 12h6M2 4v6M12 4v6" stroke={F} strokeWidth=".8" /></Ic>
              <Field $w={86}><FieldStep><Stepper c="#c0c0c0" /></FieldStep><FieldText>4,233 mm</FieldText></Field>
            </CRow>
            <CRow $pl={20}>
              <Field $w={86}><LightFrame><LightFrameTick /></LightFrame><FieldEnd $w={18}><Caret /></FieldEnd></Field>
            </CRow>
          </Col>
          <Col $l={17} $w={209}>
            <CRow $gap={10}>
              <Ic s={18} vb="0 0 18 18"><path d="M3 3h11v11H3z" stroke={F} strokeDasharray="2.500 1.500" /><path d="M3 3h2v2H3zM12 3h2v2h-2zM3 12h2v2H3zM12 12h2v2h-2z" fill={F} /></Ic>
              <Field $w={181} $fill="#eaeaea"><StyleSelect>[Einfacher Grafikrahmen]+</StyleSelect><FieldEnd $w={18}><Caret /></FieldEnd></Field>
            </CRow>
            <CRow $gap={8} $pl={161}>
              <Ic s={20} c="#888" vb="0 0 22 22"><path d="M3 5h8v9H3z" fill={F} /><path d="M5 8h8v9H5zM14 14h4M14 10c3-1 5 1 4 4" stroke={F} /></Ic>
              <Ic s={18} c="#9a9a9a" vb="0 0 18 18"><path d="M2 4h10v10H2z" stroke={F} strokeDasharray="2 1" /><path d="M17 2l-7 7" stroke={F} strokeWidth="1.300" /></Ic>
            </CRow>
          </Col>
          <Col $l={484} $w={14} $pt={12}>
            <Ic w={13} h={20} c="#8c8c8c" vb="0 0 13 20"><path d="M10 0 2 11h4l-3 9 9-13H7z" fill={F} /></Ic>
          </Col>
          <ControlEnd>
            <Ic s={15} vb="0 0 16 16"><path d="M8 1l1.300 2 2.300-.6.400 2.400 2.400.4-.6 2.300 2 1.300-2 1.300.6 2.300-2.400.4-.4 2.400-2.300-.6L8 16l-1.300-2-2.300.6-.4-2.400L1.600 12l.6-2.300L.2 8.400l2-1.300-.6-2.300L4 4.400l.4-2.400 2.300.6zM8 5.500a2.500 2.500 0 1 0 0 5 2.500 2.500 0 0 0 0-5z" fill={F} fillRule="evenodd" /></Ic>
            <Ic s={14} vb="0 0 14 14"><path d="M1 3h12M1 7h12M1 11h12" stroke={F} /></Ic>
          </ControlEnd>
        </ControlBar>

        <Body>
          <Side $w={73}>
            <CollapseStrip $align="flex-start">‹‹</CollapseStrip>
            <Gripper />
            <Tools>
              {tools.map((g, i) => (
                <ToolGroup key={i}>
                  {g.map(([icon, on, corner], j) => (
                    <Tool key={j} $on={on}>{icon}{corner && <Corner />}</Tool>
                  ))}
                </ToolGroup>
              ))}
            </Tools>
            <SwatchArea>
              <Fill><Ic s={35} c="#b3262b" vb="0 0 35 35"><path d="M0 35 35 0" stroke={F} strokeWidth="2" /></Ic></Fill>
              <StrokeBox><StrokeHole /><SlashOver><Ic s={33} c="#b3262b" vb="0 0 33 33"><path d="M0 33 33 0" stroke={F} strokeWidth="2" /></Ic></SlashOver></StrokeBox>
              <SwapArrow><Ic s={12} vb="0 0 12 12"><path d="M1 3h7a2 2 0 0 1 2 2v5M3 1 1 3l2 2M8 8l2 2.500L12 8" stroke={F} strokeWidth="1.300" /></Ic></SwapArrow>
              <MiniDefault><Ic s={13} vb="0 0 13 13"><rect x="4" y="4" width="8.500" height="8.500" fill="#222" stroke="#ccc" /><rect x=".5" y=".5" width="8" height="8" fill="#fff" stroke="#222" /><path d="M1 8l7-7" stroke="#b3262b" /></Ic></MiniDefault>
            </SwatchArea>
            <ToolRow $mt={2} $pl={15} $gap={5}>
              <SmallBtn $on><Ic s={12} vb="0 0 12 12"><rect x="1.500" y="1.500" width="9" height="9" stroke={F} /></Ic></SmallBtn>
              <SmallBtn>T</SmallBtn>
            </ToolRow>
            <ToolRow $mt={6} $pl={7} $gap={2}>
              <SmallBtn><Ic s={12} c="#e6007e" vb="0 0 12 12"><rect width="12" height="12" fill={F} /></Ic></SmallBtn>
              <SmallBtn><Ic s={12} vb="0 0 12 12"><defs><linearGradient id="g3" x1="0" x2="1"><stop offset="0" stopColor="#fff" /><stop offset="1" stopColor="#333" /></linearGradient></defs><rect width="12" height="12" fill="url(#g3)" /></Ic></SmallBtn>
              <SmallBtn $on><Ic s={12} vb="0 0 12 12"><rect width="12" height="12" fill="#fff" /><path d="M0 12 12 0" stroke="#b3262b" strokeWidth="1.200" /></Ic></SmallBtn>
            </ToolRow>
            <ToolRow $mt={8} $pl={8} $gap={5}>
              <SmallBtn $on $w={28} $h={22}><Ic s={14} vb="0 0 14 14"><rect x=".5" y=".5" width="13" height="13" stroke={F} /><path d="M3 3h5v5H3zM6 6h5v5H6z" stroke={F} /></Ic></SmallBtn>
              <SmallBtn $w={22} $h={22}><Ic s={14} vb="0 0 14 14"><rect x=".5" y=".5" width="13" height="13" fill="#6a6a6a" stroke={F} /><path d="M1 1h12v2.500H1z" fill={F} /></Ic><Corner $r={0} /></SmallBtn>
            </ToolRow>
          </Side>

          <Workspace>
            <TabRow>
              <DocTab>*Unbenannt-1 @ 300 %<span>✕</span></DocTab>
            </TabRow>
            <RulerRow>
              <RulerCorner><Ic s={12} c="#888" vb="0 0 12 12"><path d="M6 1v10M1 6h10" stroke={F} strokeDasharray="1 1" /></Ic></RulerCorner>
              <HRuler />
            </RulerRow>
            <MainRow>
              <VRuler><VRulerArt /></VRuler>
              <Canvas>
                <Bleed />
                <Overlay width={1630} height={927} viewBox="0 0 1630 927">
                  <path d="M153 52H1630M153 52V831H1359" stroke="#5b0b45" strokeWidth="1" fill="none" />
                  <path d="M195 94H1316V788H195Z" stroke="#d565cf" strokeWidth="1" fill="none" />
                  <path d="M111 9 1359 874M1359 9 111 874" stroke="#8d59c9" strokeWidth="1" fill="none" />
                  <path d="M1359 832.500H1630" stroke="#000" strokeWidth="3" />
                  <path d="M1400 94V788H1630" stroke="#b46cc4" strokeWidth="1" fill="none" />
                  <path d="M1359 874.500H1630" stroke="#e3689b" strokeWidth="1" />
                </Overlay>
              </Canvas>
              <ScrollCol><Caret c="#777" /></ScrollCol>
            </MainRow>
            <StatusBar>
              <StatusCell $l={11} $w={19}><NavI d="M2 2h1.500v8H2zM10 2v8L4 6z" /></StatusCell>
              <NavI d="M9 2v8L3 6z" />
              <PageField>1<PageCaret><Caret /></PageCaret></PageField>
              <StatusCell $l={10}><NavI d="M3 2l6 4-6 4z" /></StatusCell>
              <StatusCell $l={9}><Ic s={12} vb="0 0 12 12"><path d="M2 2l6 4-6 4zM8.500 2H10v8H8.500z" fill={F} /></Ic></StatusCell>
              <StatusCell $l={16}><Ic s={16} vb="0 0 16 16"><path d="M2 13V7a5 5 0 0 1 10 0v6" stroke={F} strokeWidth="2" /><path d="M6 4l3 3H6z" fill={F} /><path d="M14 13h2l-1 1z" fill={F} /></Ic></StatusCell>
              <StatusCell $l={14} $w={102}>[Grundprofil] (Arb...</StatusCell>
              <Caret />
              <StatusCell $l={15} $w={17}><Dot /></StatusCell>
              <StatusCell $l={0} $w={72}>Ohne Fehler</StatusCell>
              <Caret />
              <StatusCell $l={10}><Ic s={9} c="#666" vb="0 0 10 10"><path d="M6.500 1.500 3 5l3.500 3.500" stroke={F} /></Ic></StatusCell>
              <ScrollThumb />
              <StatusRight>
                <Chev c="#777" />
                <Ic w={16} h={12} c="#a8a8a8" vb="0 0 16 12"><path d="M.7.7h14.600v10.600H.7zM8 1v10" stroke={F} strokeWidth="1.300" /></Ic>
                <Ic s={12} c="#666" vb="0 0 12 12"><path d="M10 2v1M8 4v1M10 4v1M6 6v1M8 6v1M10 6v1M4 8v1M6 8v1M8 8v1M10 8v1" stroke={F} /></Ic>
              </StatusRight>
            </StatusBar>
          </Workspace>

          <Panel>
            <PanelTabs>
              <PTab $on $w={62}><Ic w={7} h={12} c="#999" vb="0 0 7 12"><path d="M1 4.500 3.500 1.500 6 4.500M1 7.500l2.500 3 2.500-3" stroke={F} /></Ic>Seiten</PTab>
              <PTab $w={64}>Ebenen</PTab>
              <PTab $w={108}>Verknüpfungen</PTab>
              <PanelTools>
                <span>››</span>
                <Ic w={2} h={12} c="#777" vb="0 0 2 12"><path d="M1 0v12" stroke={F} /></Ic>
                <Ic s={11} c="#999" vb="0 0 11 11"><path d="M0 2h11M0 4.500h11M0 7h11M0 9.500h11" stroke={F} /></Ic>
              </PanelTools>
            </PanelTabs>
            <Masters>
              <MasterRow>[Ohne]<MasterThumb><MasterPage /></MasterThumb></MasterRow>
              <MasterRow>A-Musterseite<MasterThumb><MasterPage /><MasterPage $b /></MasterThumb></MasterRow>
            </Masters>
            <MastersEnd />
            <PagesArea>
              <Marker />
              <Spread>
                <SpreadPage $c="#8838b0"><PageA $strong>A</PageA></SpreadPage>
                <SpreadPage $c="#97c1f2"><PageA $strong $r>A</PageA></SpreadPage>
                <Spine $t={-8} $b={-5} />
              </Spread>
              <SpreadLabel $on>[1-2]</SpreadLabel>
              <Spread>
                <SpreadPage $c="#fff"><PageA>A</PageA></SpreadPage>
                <SpreadPage $c="#fff"><PageA $r>A</PageA></SpreadPage>
                <Spine $t={-6} $b={-5} />
              </Spread>
              <SpreadLabel>3-4</SpreadLabel>
            </PagesArea>
            <PanelFoot>
              4 Seiten auf 2 Druckbögen
              <FootIcons>
                <Ic s={18} c="#b5b5b5" vb="0 0 18 18"><path d="M1 6h7l2-4h5v10H1zM8 6v6" stroke={F} /></Ic>
                <Ic s={14} c="#bdbdbd" vb="0 0 14 14"><path d="M1 1h12v12H5l-4-4z" fill={F} /><path d="M1 9h4v4" fill="#333" /></Ic>
                <Ic s={15} c="#a8a8a8" vb="0 0 15 15"><path d="M1 3h13M5 3V1h5v2M3 3v11h9V3M6 6v6M9 6v6" stroke={F} /></Ic>
              </FootIcons>
              <FootGrip />
            </PanelFoot>
          </Panel>

          <Dock $w={183}>
            <CollapseStrip $align="flex-end">‹‹</CollapseStrip>
            {dockSections.map((sec, i) => (
              <DockSection key={i} $first={i === 0}>
                {sec.map(([name, icon]) => (
                  <DockItem key={name} $on={name === "Seiten"}>
                    <DockIcon $big={name === "Glyphen"}>{icon}</DockIcon>
                    <DockLabel>{name}</DockLabel>
                  </DockItem>
                ))}
              </DockSection>
            ))}
            <DockFill />
          </Dock>
        </Body>

        <Cursor width="13" height="19" viewBox="0 0 13 19">
          <path d="M1 1v14l3.500-3.200L7 17.500l2.500-1-2.500-5.200h4.500z" fill="#fff" stroke="#000" strokeWidth=".8" />
        </Cursor>
      </Frame>
    </>
  );
}
